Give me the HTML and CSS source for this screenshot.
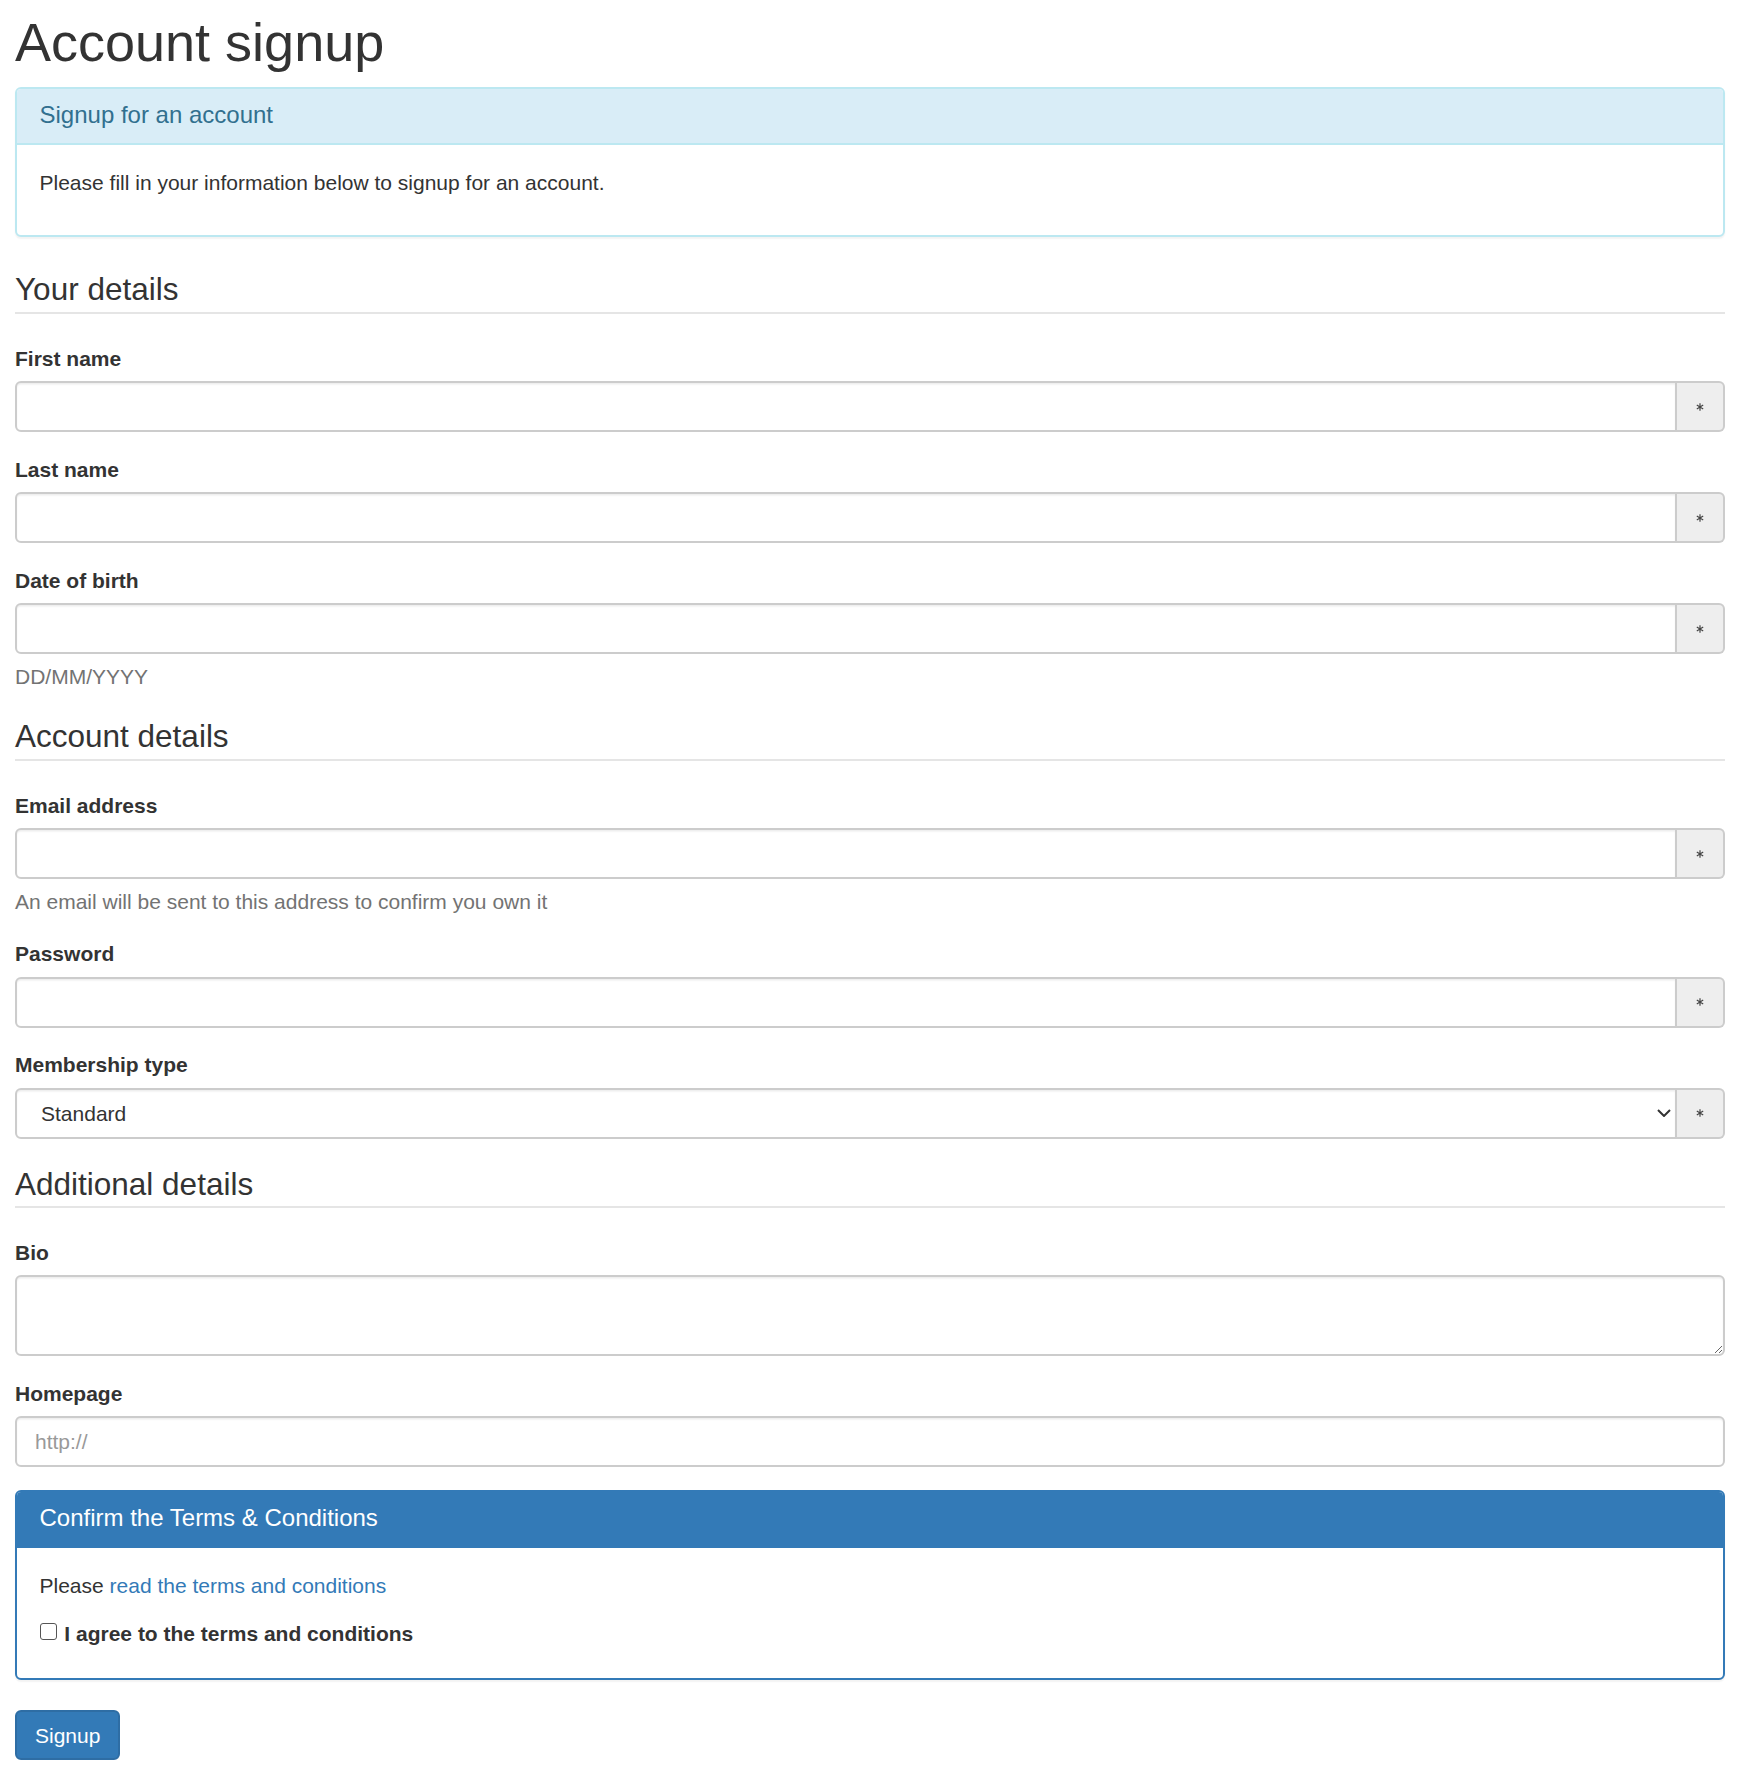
FILE: index.html
```html
<!DOCTYPE html>
<html lang="en">
<head>
<meta charset="utf-8">
<title>Account signup</title>
<link rel="stylesheet" href="styles.css">
</head>
<body>
<h1 class="page-title">Account signup</h1>

<div class="panel panel-info">
  <div class="panel-heading"><h3 class="panel-title">Signup for an account</h3></div>
  <div class="panel-body"><p class="panel-text">Please fill in your information below to signup for an account.</p></div>
</div>

<form class="signup-form">
  <section class="fieldset">
    <h2 class="legend">Your details</h2>
    <div class="form-group">
      <label class="control-label">First name</label>
      <div class="input-group">
        <input class="form-control" type="text">
        <span class="addon"><svg class="star" viewBox="0 0 8 8" width="8" height="8"><path d="M4 0.3V7.7M0.8 2.1L7.2 5.9M0.8 5.9L7.2 2.1"/></svg></span>
      </div>
    </div>
    <div class="form-group">
      <label class="control-label">Last name</label>
      <div class="input-group">
        <input class="form-control" type="text">
        <span class="addon"><svg class="star" viewBox="0 0 8 8" width="8" height="8"><path d="M4 0.3V7.7M0.8 2.1L7.2 5.9M0.8 5.9L7.2 2.1"/></svg></span>
      </div>
    </div>
    <div class="form-group">
      <label class="control-label">Date of birth</label>
      <div class="input-group">
        <input class="form-control" type="text">
        <span class="addon"><svg class="star" viewBox="0 0 8 8" width="8" height="8"><path d="M4 0.3V7.7M0.8 2.1L7.2 5.9M0.8 5.9L7.2 2.1"/></svg></span>
      </div>
      <p class="help-block">DD/MM/YYYY</p>
    </div>
  </section>

  <section class="fieldset">
    <h2 class="legend">Account details</h2>
    <div class="form-group">
      <label class="control-label">Email address</label>
      <div class="input-group">
        <input class="form-control" type="email">
        <span class="addon"><svg class="star" viewBox="0 0 8 8" width="8" height="8"><path d="M4 0.3V7.7M0.8 2.1L7.2 5.9M0.8 5.9L7.2 2.1"/></svg></span>
      </div>
      <p class="help-block">An email will be sent to this address to confirm you own it</p>
    </div>
    <div class="form-group">
      <label class="control-label">Password</label>
      <div class="input-group">
        <input class="form-control" type="password">
        <span class="addon"><svg class="star" viewBox="0 0 8 8" width="8" height="8"><path d="M4 0.3V7.7M0.8 2.1L7.2 5.9M0.8 5.9L7.2 2.1"/></svg></span>
      </div>
    </div>
    <div class="form-group">
      <label class="control-label">Membership type</label>
      <div class="input-group">
        <div class="select-wrap">
          <select class="form-control select-control">
            <option>Standard</option>
            <option>Premium</option>
          </select>
          <svg class="chevron" viewBox="0 0 14 8" width="14" height="8"><path d="M1 1L7 7L13 1"/></svg>
        </div>
        <span class="addon"><svg class="star" viewBox="0 0 8 8" width="8" height="8"><path d="M4 0.3V7.7M0.8 2.1L7.2 5.9M0.8 5.9L7.2 2.1"/></svg></span>
      </div>
    </div>
  </section>

  <section class="fieldset">
    <h2 class="legend">Additional details</h2>
    <div class="form-group">
      <label class="control-label">Bio</label>
      <textarea class="form-control textarea-control" rows="2"></textarea>
    </div>
    <div class="form-group">
      <label class="control-label">Homepage</label>
      <input class="form-control single" type="url" placeholder="http://">
    </div>
  </section>

  <div class="panel panel-primary">
    <div class="panel-heading"><h3 class="panel-title">Confirm the Terms &amp; Conditions</h3></div>
    <div class="panel-body">
      <p class="panel-text">Please <a class="link" href="#">read the terms and conditions</a></p>
      <div class="checkbox">
        <label class="check-label"><input type="checkbox" class="check-input"> I agree to the terms and conditions</label>
      </div>
    </div>
  </div>

  <button type="button" class="btn-primary">Signup</button>
</form>
</body>
</html>
```

FILE: styles.css
```css
html, body {
  background: #fff;
}
body {
  margin: 0;
  padding: 0 16px 20px 15px;
  font-family: "Liberation Sans", Arial, Helvetica, sans-serif;
  font-size: 21px;
  line-height: 30px;
  color: #333;
}
* { box-sizing: border-box; }

.page-title {
  font-size: 54px;
  line-height: 59.4px;
  font-weight: 500;
  margin: 12.6px 0 15px;
  color: #333;
}

.panel {
  border: 2px solid transparent;
  border-radius: 6px;
  margin-bottom: 30px;
  background: #fff;
  box-shadow: 0 1.5px 1.5px rgba(0,0,0,.05);
}
.panel-heading {
  padding: 13px 22.5px 15px;
  border-bottom: 2px solid transparent;
  border-radius: 4px 4px 0 0;
}
.panel-title {
  margin: 0;
  font-size: 24px;
  line-height: 26.4px;
  font-weight: 500;
}
.panel-body {
  padding: 22.5px;
}
.panel-text {
  margin: 0 0 15px;
}
.panel-info { border-color: #bce8f1; }
.panel-info .panel-heading {
  background: #d9edf7;
  color: #31708f;
  border-bottom-color: #bce8f1;
}
.panel-primary { border-color: #337ab7; }
.panel-primary .panel-heading {
  background: #337ab7;
  color: #fff;
  border-bottom-color: #337ab7;
}

.signup-form { margin: 0; }
.fieldset { margin: 0; padding: 0; }
.legend {
  margin: 0 0 30px;
  font-size: 31.5px;
  line-height: 44.3px;
  font-weight: 500;
  color: #333;
  border-bottom: 2px solid #e5e5e5;
}

.form-group { margin-bottom: 22.6px; }
.control-label {
  display: block;
  font-weight: 700;
  margin-bottom: 7.5px;
}

.input-group {
  display: flex;
  width: 100%;
}
.form-control {
  display: block;
  width: 100%;
  height: 51px;
  padding: 9px 18px;
  font-family: inherit;
  font-size: 21px;
  line-height: 30px;
  color: #555;
  background: #fff;
  border: 2px solid #ccc;
  border-radius: 6px;
  box-shadow: inset 0 1.5px 1.5px rgba(0,0,0,.075);
  outline: none;
  margin: 0;
}
.form-control::placeholder { color: #999; }
.input-group .form-control {
  flex: 1 1 auto;
  min-width: 0;
  border-radius: 6px 0 0 6px;
}
.addon {
  flex: 0 0 48px;
  height: 51px;
  display: flex;
  align-items: center;
  justify-content: center;
  background: #eee;
  border: 2px solid #ccc;
  border-left: 0;
  border-radius: 0 6px 6px 0;
}
.star {
  display: block;
  fill: none;
  stroke: #444;
  stroke-width: 1.2;
}

.select-wrap {
  position: relative;
  flex: 1 1 auto;
  min-width: 0;
}
.select-control {
  -webkit-appearance: none;
  appearance: none;
  padding-left: 24px;
  padding-right: 40px;
  border-radius: 6px 0 0 6px;
  color: #333;
}
.chevron {
  position: absolute;
  right: 6px;
  top: 21px;
  fill: none;
  stroke: #333;
  stroke-width: 2;
  pointer-events: none;
}

.textarea-control {
  height: 81px;
  resize: vertical;
}
.single { border-radius: 6px; }

.help-block {
  display: block;
  margin: 7.5px 0 15px;
  color: #737373;
}

.link {
  color: #337ab7;
  text-decoration: none;
}

.checkbox {
  margin: 18px 0 6.5px;
}
.check-label {
  display: flex;
  align-items: center;
  font-weight: 700;
  white-space: pre;
}
.check-input {
  -webkit-appearance: none;
  appearance: none;
  width: 17px;
  height: 17px;
  margin: 0 2px 0 0;
  border: 1.5px solid #555;
  border-radius: 3px;
  background: #fff;
  flex: 0 0 auto;
  position: relative;
  top: -2px;
}

.btn-primary {
  display: inline-block;
  height: 50px;
  padding: 9px 18px;
  font-family: inherit;
  font-size: 21px;
  line-height: 30px;
  color: #fff;
  background: #337ab7;
  border: 2px solid #2e6da4;
  border-radius: 6px;
  cursor: pointer;
}
```
